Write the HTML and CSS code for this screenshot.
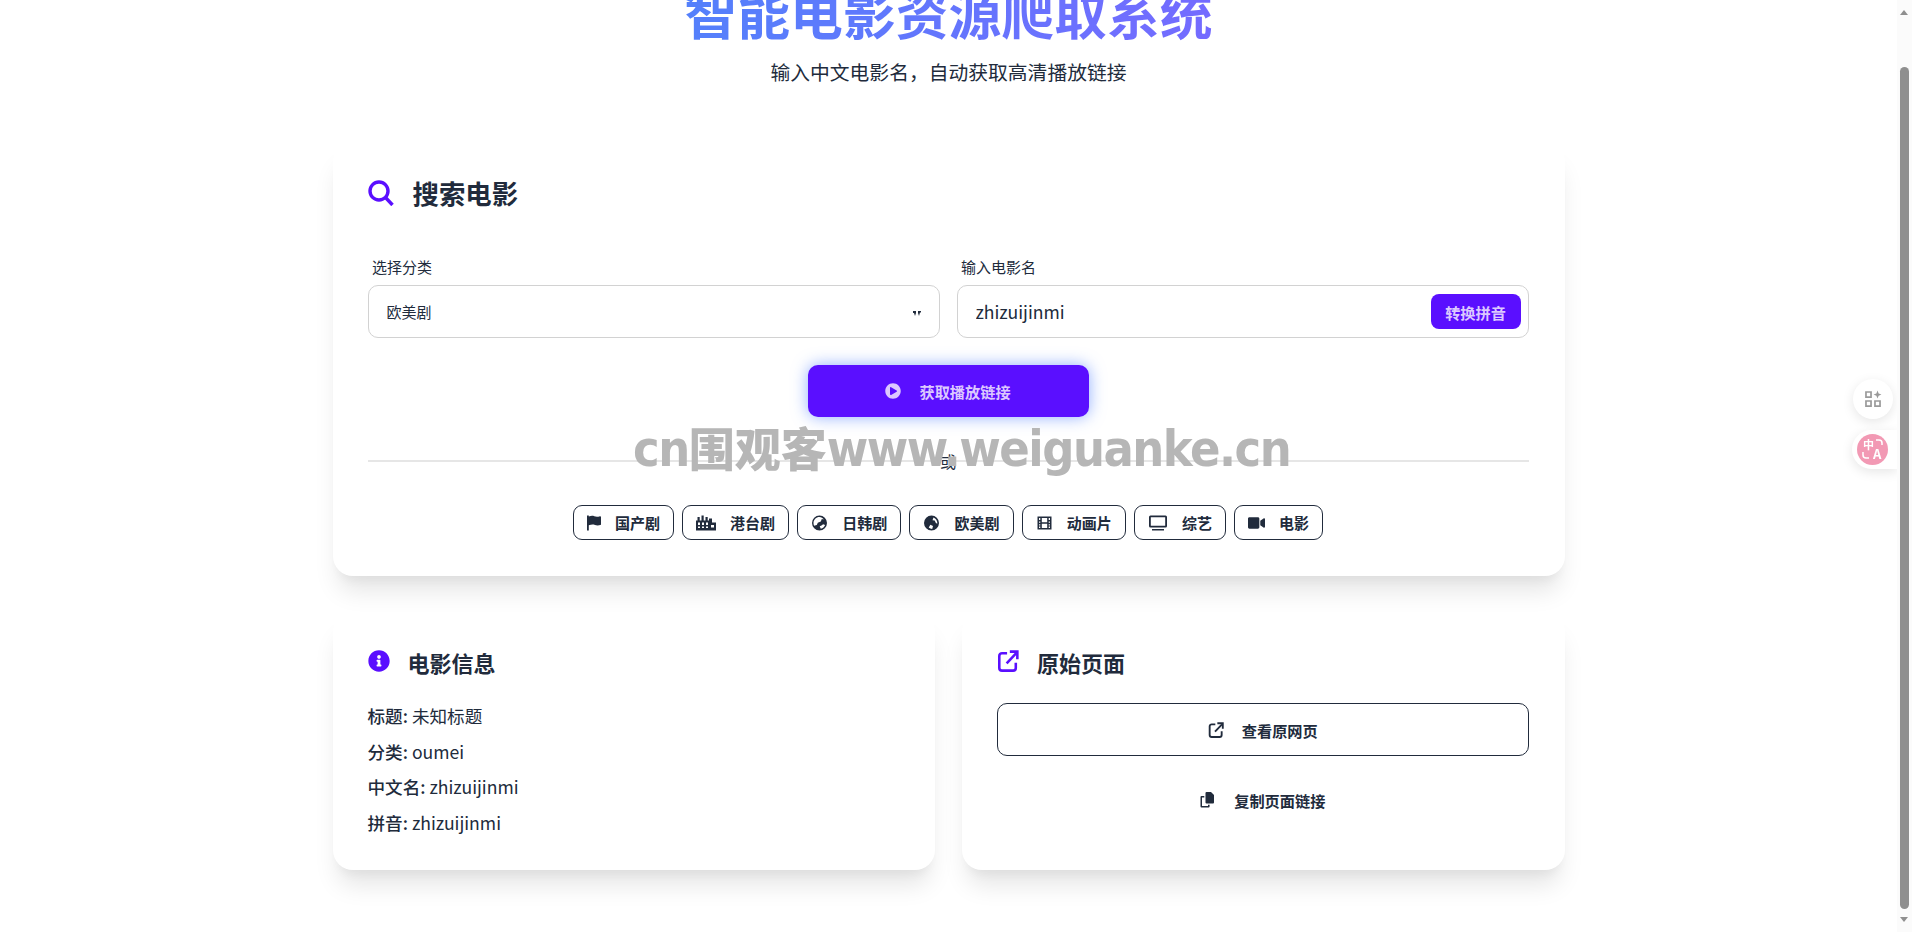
FILE: index.html
```html
<!DOCTYPE html>
<html lang="zh-CN">
<head>
    <meta charset="UTF-8">
    <meta name="viewport" content="width=device-width, initial-scale=1.0">
    <title>智能电影资源爬取系统</title>
    <link rel="stylesheet" href="styles.css">
</head>
<body>
    <div class="page">
        <div class="container">
            <div class="header">
                <h1>智能电影资源爬取系统</h1>
                <p>输入中文电影名，自动获取高清播放链接</p>
            </div>

            <div class="card search-card">
                <h2 class="search-title">
                    <svg class="icon-search" viewBox="0 0 26 26"><circle cx="11" cy="11" r="9"/><path d="M17.500 17.500L24.500 25"/></svg>
                    搜索电影
                </h2>

                <div class="form-row">
                    <div class="form-group">
                        <label class="form-label">选择分类</label>
                        <div class="select-wrap">
                            <select class="form-select">
                                <option>欧美剧</option>
                            </select>
                            <svg class="select-arrow" viewBox="0 0 8 6"><path d="M0 0h3v2l-1 3-1-3H0zM5 0h3v1.500H7l-1 3.500-1-3z"/></svg>
                        </div>
                    </div>
                    <div class="form-group">
                        <label class="form-label">输入电影名</label>
                        <div class="input-box">
                            <input class="form-input" type="text" value="zhizuijinmi">
                            <button class="convert-button">转换拼音</button>
                        </div>
                    </div>
                </div>

                <div class="submit-row">
                    <button class="submit-button">
                        <svg class="icon-play" viewBox="0 0 512 512"><path d="M256 8C119 8 8 119 8 256s111 248 248 248 248-111 248-248S393 8 256 8zm115.700 272l-176 101c-15.800 8.800-35.700-2.500-35.700-20V152c0-17.400 19.800-28.800 35.700-20l176 107c16.400 9.200 16.400 32.900 0 41z"/></svg>
                        获取播放链接
                    </button>
                </div>

                <div class="divider"><span>或</span></div>

                <div class="pills">
                    <button class="pill">
                        <svg class="pill-icon icon-narrow" viewBox="0 0 14 15"><path d="M0 0h1.800v15H0zM1.800 1c2.600-1 4-.8 5.500-.3 1.400.5 3 .8 5.700 0 .5 0 1 .2 1 .7v7.800c-2.600 1.100-4.400.9-6 .3-1.700-.6-3.400-.7-6.200.3z"/></svg>
                        国产剧
                    </button>
                    <button class="pill">
                        <svg class="pill-icon icon-wide" viewBox="0 0 20 15"><path fill-rule="evenodd" d="M0 15V5h1.500V1.500h2.200V5h1.800V0h2.200v5h1.800V1.500h2.200V5H13V3h3v4h4v8zM2 7v2.500h2V7zM6 7v2.500h2V7zM10 7v2.500h2V7zM2 11v1.500h2V11zM6 11v1.500h2V11zM10 11v1.500h2V11zM15 9.500V12h3V9.500z"/></svg>
                        港台剧
                    </button>
                    <button class="pill">
                        <svg class="pill-icon" viewBox="0 0 16 16"><path fill-rule="evenodd" d="M8 .500a7.500 7.500 0 1 1 0 15A7.500 7.500 0 0 1 8 .500zM2.600 10.800l2.700-.8 1-2.200 3-1.200 1-2.600 2 .5C11.300 3 9.800 2 8 2 4.600 2 2 4.700 2 8c0 1 .2 2 .6 2.800zM9.300 13.800c2-.5 3.600-2 4.300-3.800l-2-.8-1.600 1.300-1.800.8z"/></svg>
                        日韩剧
                    </button>
                    <button class="pill">
                        <svg class="pill-icon" viewBox="0 0 16 16"><path fill-rule="evenodd" d="M8 .500a7.500 7.500 0 1 1 0 15A7.500 7.500 0 0 1 8 .500zM10 2.400l-1 2.800 2.200.4 1.300 2.600 1.400.2C13.800 5.400 12.300 3.300 10 2.400zM8.700 13.900l.8-3-2.600-1.200-1.700 2.900c1 .9 2.200 1.300 3.500 1.300z"/></svg>
                        欧美剧
                    </button>
                    <button class="pill">
                        <svg class="pill-icon" viewBox="0 0 16 16"><path fill-rule="evenodd" d="M1 1.500h14v13H1zM2.500 3v2h1.300V3zM2.500 6.500v1.200h1.300V6.500zM2.500 9.200v1.200h1.300V9.200zM2.500 11.500V13h1.300v-1.500zM12.200 3v2h1.300V3zM12.200 6.500v1.200h1.300V6.500zM12.200 9.200v1.200h1.300V9.200zM12.200 11.500V13h1.300v-1.500zM5.300 3v4.200h5.400V3zM5.300 8.700V13h5.400V8.700z"/></svg>
                        动画片
                    </button>
                    <button class="pill">
                        <svg class="pill-icon icon-wide" viewBox="0 0 20 15"><path fill-rule="evenodd" d="M2.500 0h15A1.500 1.500 0 0 1 19 1.500v9a1.500 1.500 0 0 1-1.500 1.500h-15A1.500 1.500 0 0 1 1 10.500v-9A1.500 1.500 0 0 1 2.500 0zM2.800 1.800v8.400h14.400V1.800zM4 13.500h12V15H4z"/></svg>
                        综艺
                    </button>
                    <button class="pill">
                        <svg class="pill-icon" viewBox="0 0 576 512"><path d="M336.200 64H47.800C21.400 64 0 85.400 0 111.800v288.400C0 426.600 21.400 448 47.800 448h288.400c26.400 0 47.800-21.400 47.800-47.800V111.800c0-26.400-21.400-47.800-47.800-47.800zm189.400 37.700L416 177.300v157.400l109.600 75.500c21.200 14.600 50.400-.3 50.400-25.800V127.500c0-25.400-29.100-40.400-50.400-25.800z"/></svg>
                        电影
                    </button>
                </div>
            </div>

            <div class="result-grid">
                <div class="card result-card">
                    <h3 class="result-title">
                        <svg class="icon-title" viewBox="0 0 512 512"><path d="M256 8C119.043 8 8 119.083 8 256c0 136.997 111.043 248 248 248s248-111.003 248-248C504 119.083 392.957 8 256 8zm0 110c23.196 0 42 18.804 42 42s-18.804 42-42 42-42-18.804-42-42 18.804-42 42-42zm56 254c0 6.627-5.373 12-12 12h-88c-6.627 0-12-5.373-12-12v-24c0-6.627 5.373-12 12-12h12v-64h-12c-6.627 0-12-5.373-12-12v-24c0-6.627 5.373-12 12-12h64c6.627 0 12 5.373 12 12v100h12c6.627 0 12 5.373 12 12v24z"/></svg>
                        电影信息
                    </h3>
                    <p class="info-row"><strong>标题:</strong> 未知标题</p>
                    <p class="info-row"><strong>分类:</strong> oumei</p>
                    <p class="info-row"><strong>中文名:</strong> zhizuijinmi</p>
                    <p class="info-row"><strong>拼音:</strong> zhizuijinmi</p>
                </div>

                <div class="card result-card">
                    <h3 class="result-title">
                        <svg class="icon-title icon-link" viewBox="0 0 24 24"><path d="M11 3.500H5.500a3 3 0 0 0-3 3v13a3 3 0 0 0 3 3h12a3 3 0 0 0 3-3V14"/><path d="M10.500 14.500L21 3.500"/><path d="M14 1.800h8.200V10"/></svg>
                        原始页面
                    </h3>
                    <button class="link-button link-outline">
                        <svg class="icon-small icon-link" viewBox="0 0 24 24"><path d="M11 3.500H5.500a3 3 0 0 0-3 3v13a3 3 0 0 0 3 3h12a3 3 0 0 0 3-3V14"/><path d="M10.500 14.500L21 3.500"/><path d="M14 1.800h8.200V10"/></svg>
                        查看原网页
                    </button>
                    <button class="link-button">
                        <svg class="icon-small" viewBox="0 0 16 16"><path d="M6.500 0H11l3 3v7.500a1 1 0 0 1-1 1H6.500a1 1 0 0 1-1-1V1a1 1 0 0 1 1-1z"/><path d="M1.500 4H4.300v1.600H2v8.400h6v-1.200h1.600V14.500a1 1 0 0 1-1 1H1.500a1 1 0 0 1-1-1V5a1 1 0 0 1 1-1z"/></svg>
                        复制页面链接
                    </button>
                </div>
            </div>
        </div>
    </div>

    <div class="watermark">cn<span>围观客</span>www.weiguanke.cn</div>

    <!-- 右侧浮动工具 -->
    <div class="float-tool">
        <svg viewBox="0 0 16 16"><path fill-rule="evenodd" d="M1 1h6v6H1zM2.500 2.500v3h3v-3zM1 9h6v6H1zM2.500 10.500v3h3v-3zM9 9h6v6H9zM10.500 10.500v3h3v-3z"/><path d="M12 .500l1 2.500 2.500 1-2.500 1-1 2.500-1-2.500-2.500-1 2.500-1z"/></svg>
    </div>
    <div class="float-translate">
        <div class="translate-badge">
            <svg viewBox="0 0 31 31">
                <text class="badge-zh" x="6" y="15">中</text>
                <text class="badge-a" x="16" y="25">A</text>
                <path d="M19 6h3a3 3 0 0 1 3 3v2M6 18v3a3 3 0 0 0 3 3h3"/>
            </svg>
        </div>
    </div>

    <!-- 滚动条 -->
    <div class="scrollbar">
        <span class="scroll-up"></span>
        <span class="scroll-thumb"></span>
        <span class="scroll-down"></span>
    </div>
</body>
</html>
```

FILE: styles.css
```css
* {
    margin: 0;
    padding: 0;
    box-sizing: border-box;
}

html, body {
    height: 100%;
    overflow: hidden;
}

body {
    font-family: 'Noto Sans CJK SC', 'Noto Sans', sans-serif;
    background: #fff;
    color: #212b3c;
}

.page {
    width: 1897px;
}

.container {
    width: 1232px;
    margin: 0 auto;
}

.header {
    text-align: center;
    margin-top: -20px;
    margin-bottom: 55px;
}

.header h1 {
    display: inline-block;
    font-size: 52.800px;
    line-height: 64px;
    font-weight: 700;
    background: linear-gradient(90deg, #5480fb 0%, #746bff 100%);
    -webkit-background-clip: text;
    background-clip: text;
    color: transparent;
}

.header p {
    font-size: 19.800px;
    line-height: 30px;
    margin-top: 13px;
}

.card {
    background: #fff;
    border-radius: 20px;
    padding: 35px 36px 35px 35px;
    box-shadow: 0 20px 25px -5px rgba(0, 0, 0, 0.1), 0 10px 10px -5px rgba(0, 0, 0, 0.04);
}

.search-card {
    padding-bottom: 36px;
}

.search-title {
    display: flex;
    align-items: center;
    gap: 19px;
    font-size: 26.400px;
    line-height: 32px;
    font-weight: 700;
    margin-bottom: 46px;
}

.icon-search {
    width: 26px;
    height: 26px;
    fill: none;
    stroke: #5a0fff;
    stroke-width: 3.400;
}

.form-row {
    display: grid;
    grid-template-columns: 1fr 1fr;
    gap: 17px;
}

.form-label {
    display: block;
    font-size: 15px;
    line-height: 24px;
    padding-left: 4.500px;
    margin-bottom: 6px;
}

.select-wrap {
    position: relative;
}

.form-select {
    appearance: none;
    display: block;
    width: 100%;
    height: 53px;
    padding: 0 18px;
    border: 1px solid #d2d2d2;
    border-radius: 10px;
    background: #fff;
    font-family: inherit;
    font-size: 15px;
    color: #212b3c;
}

.select-arrow {
    position: absolute;
    right: 19px;
    top: 26px;
    width: 8px;
    height: 6px;
    fill: #212b3c;
}

.input-box {
    display: flex;
    align-items: center;
    height: 53px;
    padding: 0 7px 0 18px;
    border: 1px solid #d2d2d2;
    border-radius: 10px;
}

.form-input {
    flex: 1;
    min-width: 0;
    border: none;
    outline: none;
    font-family: inherit;
    font-size: 17.600px;
    color: #212b3c;
}

.convert-button {
    width: 90px;
    height: 35px;
    border: none;
    border-radius: 8px;
    background: #5a0fff;
    color: #dcc8ff;
    font-family: inherit;
    font-size: 15.200px;
    font-weight: 700;
}

.submit-row {
    display: flex;
    justify-content: center;
    margin-top: 27px;
}

.submit-button {
    display: flex;
    align-items: center;
    justify-content: center;
    gap: 18px;
    width: 281px;
    height: 52px;
    padding-bottom: 1px;
    border: none;
    border-radius: 10px;
    background: #5a0fff;
    color: #dcc8ff;
    font-family: inherit;
    font-size: 15.200px;
    font-weight: 700;
    box-shadow: 0 0 16px rgba(70, 120, 255, 0.6);
}

.icon-play {
    width: 16px;
    height: 16px;
    fill: #dcc8ff;
}

.divider {
    height: 2px;
    margin-top: 43px;
    background: #e6e6e6;
    text-align: center;
}

.divider span {
    position: relative;
    top: -11px;
    display: inline-block;
    font-size: 16px;
    line-height: 22px;
}

.pills {
    display: flex;
    justify-content: center;
    gap: 8.200px;
    margin-top: 43px;
}

.pill {
    display: flex;
    align-items: center;
    gap: 14px;
    height: 35px;
    padding: 0 13px;
    border: 1px solid #212b3c;
    border-radius: 9px;
    background: #fff;
    color: #212b3c;
    font-family: inherit;
    font-size: 15px;
    font-weight: 700;
}

.pill-icon {
    width: 17px;
    height: 16px;
    fill: #212b3c;
}

.icon-narrow {
    width: 14px;
}

.icon-wide {
    width: 20px;
}

.result-grid {
    display: grid;
    grid-template-columns: 1fr 1fr;
    gap: 27px;
    margin-top: 36px;
}

.result-card {
    padding-bottom: 35.500px;
}

.result-title {
    display: flex;
    align-items: center;
    gap: 18px;
    font-size: 22px;
    line-height: 30px;
    font-weight: 700;
    margin-bottom: 26px;
}

.icon-title {
    width: 22px;
    height: 22px;
    margin-top: -3px;
    fill: #5a0fff;
}

.icon-link {
    fill: none;
    stroke: #5a0fff;
    stroke-width: 2.800;
}

.info-row {
    font-size: 17.600px;
    line-height: 25px;
    margin-bottom: 10.500px;
}

.info-row:last-child {
    margin-bottom: 0;
}

.info-row strong {
    font-weight: 500;
}

.link-button {
    display: flex;
    align-items: center;
    justify-content: center;
    gap: 18px;
    width: 100%;
    height: 53px;
    margin-bottom: 17px;
    border: 1px solid transparent;
    border-radius: 10px;
    background: #fff;
    color: #212b3c;
    font-family: inherit;
    font-size: 15.200px;
    font-weight: 700;
}

.link-button:last-child {
    margin-bottom: 0;
}

.link-outline {
    border-color: #212b3c;
}

.icon-small {
    width: 16px;
    height: 16px;
    fill: #212b3c;
}

.icon-small.icon-link {
    fill: none;
    stroke: #212b3c;
}

.watermark {
    position: fixed;
    left: 633px;
    top: 414px;
    font-family: 'DejaVu Sans', sans-serif;
    font-stretch: condensed;
    font-size: 50px;
    line-height: 64px;
    font-weight: 700;
    letter-spacing: -1.500px;
    color: #b6b6b6;
    white-space: nowrap;
}

.watermark span {
    font-family: 'Noto Sans CJK SC', sans-serif;
    font-size: 46px;
    font-weight: 900;
    letter-spacing: 0;
}

.float-tool {
    position: fixed;
    left: 1853px;
    top: 379px;
    width: 40px;
    height: 40px;
    display: flex;
    align-items: center;
    justify-content: center;
    border-radius: 50%;
    background: #fff;
    box-shadow: 0 3px 12px rgba(0, 0, 0, 0.1);
}

.float-tool svg {
    width: 18px;
    height: 18px;
    fill: #9a9a9a;
}

.float-translate {
    position: fixed;
    left: 1852px;
    top: 430px;
    width: 45px;
    height: 39px;
    padding-left: 5px;
    display: flex;
    align-items: center;
    border-radius: 20px 0 0 20px;
    background: #fff;
    box-shadow: 0 3px 12px rgba(0, 0, 0, 0.1);
}

.translate-badge {
    width: 31px;
    height: 31px;
    border-radius: 50%;
    background: #f299b4;
}

.translate-badge svg {
    display: block;
    width: 31px;
    height: 31px;
    fill: #fff;
}

.translate-badge path {
    fill: none;
    stroke: #fff;
    stroke-width: 1.500;
}

.badge-zh {
    font-size: 11px;
    font-weight: 700;
}

.badge-a {
    font-size: 13px;
    font-weight: 700;
}

.scrollbar {
    position: fixed;
    top: 0;
    right: 0;
    width: 15px;
    height: 100%;
    background: #fbfbfb;
}

.scroll-up, .scroll-down {
    position: absolute;
    left: 3px;
    width: 0;
    height: 0;
    border-left: 4.500px solid transparent;
    border-right: 4.500px solid transparent;
}

.scroll-up {
    top: 10px;
    border-bottom: 5px solid #8f8f8f;
}

.scroll-down {
    bottom: 10px;
    border-top: 5px solid #8f8f8f;
}

.scroll-thumb {
    position: absolute;
    left: 3px;
    top: 67px;
    width: 9px;
    height: 842px;
    border-radius: 5px;
    background: #8f8f8f;
}
```
